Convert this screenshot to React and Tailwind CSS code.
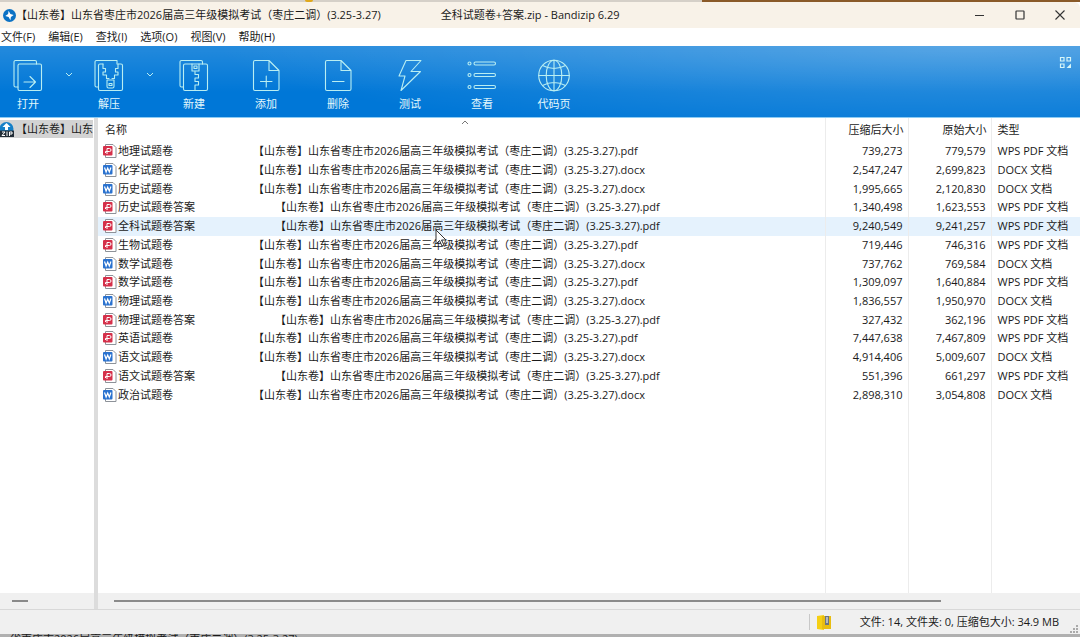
import React, {useState} from "react";

const EXAM = "【山东卷】山东省枣庄市2026届高三年级模拟考试（枣庄二调）(3.25-3.27)";

const files = [
    {name: "地理试题卷", ext: "pdf", packed: "739,273", size: "779,579"},
    {name: "化学试题卷", ext: "docx", packed: "2,547,247", size: "2,699,823"},
    {name: "历史试题卷", ext: "docx", packed: "1,995,665", size: "2,120,830"},
    {name: "历史试题卷答案", ext: "pdf", packed: "1,340,498", size: "1,623,553"},
    {name: "全科试题卷答案", ext: "pdf", packed: "9,240,549", size: "9,241,257"},
    {name: "生物试题卷", ext: "pdf", packed: "719,446", size: "746,316"},
    {name: "数学试题卷", ext: "docx", packed: "737,762", size: "769,584"},
    {name: "数学试题卷", ext: "pdf", packed: "1,309,097", size: "1,640,884"},
    {name: "物理试题卷", ext: "docx", packed: "1,836,557", size: "1,950,970"},
    {name: "物理试题卷答案", ext: "pdf", packed: "327,432", size: "362,196"},
    {name: "英语试题卷", ext: "pdf", packed: "7,447,638", size: "7,467,809"},
    {name: "语文试题卷", ext: "docx", packed: "4,914,406", size: "5,009,607"},
    {name: "语文试题卷答案", ext: "pdf", packed: "551,396", size: "661,297"},
    {name: "政治试题卷", ext: "docx", packed: "2,898,310", size: "3,054,808"},
];

const menus = ["文件(F)", "编辑(E)", "查找(I)", "选项(O)", "视图(V)", "帮助(H)"];

const Icon = ({children}) => (
    <svg width="34" height="34" viewBox="0 0 34 34" fill="none" stroke="#b9eef2" strokeWidth="1.1"
         strokeLinejoin="round" strokeLinecap="round">
        {children}
    </svg>
);

const OpenIcon = () => (
    <Icon>
        <path d="M7 29H4.5A1.5 1.5 0 0 1 3 27.5V4a1.5 1.5 0 0 1 1.5-1.5H24A1.5 1.5 0 0 1 25.5 4v2"/>
        <rect x="7" y="6" width="23.5" height="26.5" rx="1.5"/>
        <path d="M13 24h11M19 18.5l5.500 5.500-5.500 5.500"/>
    </Icon>
);

const ExtractIcon = () => (
    <Icon>
        <path d="M6 29H4.5A1.5 1.5 0 0 1 3 27.5V4a1.5 1.5 0 0 1 1.5-1.5H25V6"/>
        <path d="M11 6H8a1.5 1.5 0 0 0-1.500 1.5V31A1.5 1.5 0 0 0 8 32.5h21a1.5 1.5 0 0 0 1.5-1.5V7.5A1.5 1.5 0 0 0 29 6h-3"/>
        <path d="M11 6v4.500h2.500v3.500H11v3h3.500v3.500H17M26 6v4.500h-2.500v3.500H26v3h-3.500v3.500H20"/>
        <path d="M15 22h7v6.500a1.5 1.5 0 0 1-1.500 1.500h-4a1.5 1.5 0 0 1-1.500-1.500zM17 25.500h3v2h-3z"/>
    </Icon>
);

const NewIcon = () => (
    <Icon>
        <path d="M6 29H4.5A1.5 1.5 0 0 1 3 27.5V4a1.5 1.5 0 0 1 1.5-1.5H24A1.5 1.5 0 0 1 25.5 4v2"/>
        <rect x="6.5" y="6" width="24" height="26.5" rx="1.5"/>
        <path d="M15 6v7h7V6M17 8h3v2.500h-3z"/>
        <path d="M18 13.500v3h3.500v3.500H18v3.500h3.500V27H18v5.500"/>
    </Icon>
);

const AddIcon = () => (
    <Icon>
        <path d="M20 2.5H6A1.5 1.5 0 0 0 4.500 4v27A1.5 1.5 0 0 0 6 32.5h22.500A1.5 1.5 0 0 0 30 31V12.500zM20 2.500v10h10"/>
        <path d="M11.5 23.5h11.5M17.25 18v11"/>
    </Icon>
);

const DeleteIcon = () => (
    <Icon>
        <path d="M20 2.5H6A1.5 1.5 0 0 0 4.500 4v27A1.5 1.5 0 0 0 6 32.5h22.500A1.5 1.5 0 0 0 30 31V12.500zM20 2.500v10h10"/>
        <path d="M11.5 23.5h11.5"/>
    </Icon>
);

const TestIcon = () => (
    <Icon>
        <path d="M13 2.5H28L18 13.500h9.500L8 32.500l4-14.500H6z"/>
    </Icon>
);

const ViewIcon = () => (
    <Icon>
        {[5.5, 17, 29].map((y) => (
            <g key={y}>
                <circle cx="4.5" cy={y} r="1.5"/>
                <rect x="9" y={y - 1.5} width="21.5" height="3" rx="1.5"/>
            </g>
        ))}
    </Icon>
);

const CodePageIcon = () => (
    <Icon>
        <circle cx="17" cy="17.5" r="15.3"/>
        <ellipse cx="17" cy="17.5" rx="7.8" ry="15.3"/>
        <path d="M17 2.200v30.600M1.700 17.500h30.600M5.500 7.500q11.500 6 23 0M5.500 27.500q11.500-6 23 0"/>
    </Icon>
);

const tools = [
    {label: "新建", icon: <NewIcon/>},
    {label: "添加", icon: <AddIcon/>},
    {label: "删除", icon: <DeleteIcon/>},
    {label: "测试", icon: <TestIcon/>},
    {label: "查看", icon: <ViewIcon/>},
    {label: "代码页", icon: <CodePageIcon/>},
];

const splitTools = [
    {label: "打开", icon: <OpenIcon/>},
    {label: "解压", icon: <ExtractIcon/>},
];

const FileIcon = ({ext}) => (
    <svg width="14" height="16" viewBox="0 0 14 16" className="shrink-0">
        <path d="M2.5 1.5h7.500l3 3v10H2.500z" fill="#fff" stroke="#8d9299"/>
        <rect x="0" y="3" width="9.5" height="9.5" rx="1" fill={ext === "pdf" ? "#d5304a" : "#2a72cf"}/>
        {ext === "pdf" ? (
            <path d="M4 11V5.500H6.500a1.300 1.300 0 0 1 0 3H2.500v1.500" fill="none" stroke="#fff"/>
        ) : (
            <path d="M1.500 5.500l1.600 4.500 1.600-4 1.600 4 1.600-4.500" fill="none" stroke="#fff" strokeWidth="1.2"/>
        )}
    </svg>
);

const TitleBar = () => (
    <header className="flex h-[26px] shrink-0 items-center rounded-tr-md bg-[#f8f2e8] pl-[3px]">
        <svg width="13" height="13" viewBox="0 0 14 14" className="shrink-0">
            <circle cx="7" cy="7" r="7" fill="#0c72c4"/>
            <path d="M6 2L5.500 5.500 2.500 7.500l3.500 1L8 12l.500-3.500L11.500 6.500 8 5.500z" fill="#fff"/>
        </svg>
        <h1 className="flex whitespace-nowrap">
            <span>{EXAM}</span>
            <span className="ml-15">全科试题卷+答案.zip - Bandizip 6.29</span>
        </h1>
        <div className="ml-auto flex text-[#333]">
            <button aria-label="最小化" className="flex h-6 w-10 items-center justify-center">
                <svg width="10" height="10" viewBox="0 0 10 10" stroke="currentColor"><path d="M0 5.500h9"/></svg>
            </button>
            <button aria-label="最大化" className="flex h-6 w-10 items-center justify-center">
                <svg width="10" height="10" viewBox="0 0 10 10" fill="none" stroke="currentColor" strokeWidth="1.2">
                    <rect x="1" y="1" width="8" height="8" rx="0.5"/>
                </svg>
            </button>
            <button aria-label="关闭" className="flex h-6 w-10 items-center justify-center">
                <svg width="10" height="10" viewBox="0 0 10 10" stroke="currentColor" strokeWidth="1.1">
                    <path d="M.5.500l9 9M9.500.500l-9 9"/>
                </svg>
            </button>
        </div>
    </header>
);

const Toolbar = () => (
    <div
        className="flex h-[72px] shrink-0 items-start border-b border-[#8ccbf3] bg-[#0077d7] bg-[radial-gradient(ellipse_70%_130%_at_90%_0%,rgba(255,255,255,0.24),rgba(255,255,255,0)),linear-gradient(to_bottom,rgba(255,255,255,0.14),rgba(255,255,255,0)_65%)] text-[#e2f8fc]">
        {splitTools.map(({label, icon}) => (
            <div key={label} className="flex">
                <button className="flex w-14 flex-col items-center pt-3">
                    {icon}
                    <span className="leading-6">{label}</span>
                </button>
                <button aria-label={`${label}选项`} className="flex h-[58px] w-[25px] items-center justify-center">
                    <svg width="8" height="6" viewBox="0 0 8 6" fill="none" stroke="#b9eef2">
                        <path d="M1 1l3 3 3-3"/>
                    </svg>
                </button>
            </div>
        ))}
        <div className="flex gap-2">
            {tools.map(({label, icon}) => (
                <button key={label} className="flex w-16 flex-col items-center pt-3">
                    {icon}
                    <span className="leading-6">{label}</span>
                </button>
            ))}
        </div>
        <button aria-label="切换布局" className="mt-[10px] mr-2 ml-auto">
            <svg width="13" height="13" viewBox="0 0 13 13" fill="none" stroke="#d5f5f8" strokeWidth="1.2">
                <path d="M1.500 1.500h3.500v3.500h-3.500zM8 1.500h3.500v3.500H8zM1.500 8h3.500v3.500h-3.500z"/>
                <path d="M12 7.500V12H7.500z" fill="#d5f5f8" stroke="none"/>
            </svg>
        </button>
    </div>
);

const FolderTree = () => (
    <aside className="flex w-[94px] shrink-0 flex-col">
        <div className="mt-[2px] mr-px flex h-[18px] items-center overflow-hidden bg-[#d3d3d3] whitespace-nowrap">
            <svg width="14" height="15" viewBox="0 0 14 15" className="shrink-0">
                <circle cx="6.5" cy="7" r="7" fill="#1680c8"/>
                <path d="M6.500 1l4 4H8v3H5V5H2.500z" fill="#fff"/>
                <rect y="8.5" width="14" height="6.5" fill="#222c36"/>
                <path d="M2 10h3l-3 3.500h3M7 9.500v4.500M9.500 14v-4H12v2H9.500" fill="none" stroke="#fff"/>
            </svg>
            <span className="ml-[2px]">【山东卷】山东</span>
        </div>
        <div className="mt-auto h-4 bg-[#f0f0f0] pt-[7px] pl-3">
            <div className="h-[2px] w-4 bg-[#8a8a8a]"/>
        </div>
    </aside>
);

const FileList = () => {
    const [selected, setSelected] = useState(4);

    return (
        <main className="flex min-w-0 flex-1 flex-col overflow-hidden">
            <table className="h-[286px] w-full table-fixed border-collapse whitespace-nowrap">
                <thead>
                    <tr className="h-6 text-left">
                        <th className="relative p-0 pl-[7px] font-normal">
                            名称
                            <svg width="8" height="5" viewBox="0 0 8 5" fill="none" stroke="#777"
                                 className="absolute top-[2px] left-1/2">
                                <path d="M1 4l3-3 3 3"/>
                            </svg>
                        </th>
                        <th className="w-[83px] border-l border-[#ececec] p-0 pr-1 text-right font-normal">压缩后大小</th>
                        <th className="w-[83px] border-l border-[#ececec] p-0 pr-1 text-right font-normal">原始大小</th>
                        <th className="w-[89px] border-l border-[#ececec] p-0 pl-[6px] font-normal">类型</th>
                    </tr>
                </thead>
                <tbody>
                    {files.map((file, i) => (
                        <tr
                            key={file.name + file.ext}
                            onClick={() => setSelected(i)}
                            className={`leading-4 ${selected === i ? "bg-[#e5f2fd]" : ""}`}
                        >
                            <td className="p-0 pl-[5px]">
                                <div className="flex items-center">
                                    <FileIcon ext={file.ext}/>
                                    <span className="ml-px">{file.name}</span>
                                    <span className="ml-20">{EXAM}.{file.ext}</span>
                                </div>
                            </td>
                            <td className="border-l border-[#ececec] p-0 pr-[5px] text-right">{file.packed}</td>
                            <td className="border-l border-[#ececec] p-0 pr-[5px] text-right">{file.size}</td>
                            <td className="border-l border-[#ececec] p-0 pl-[6px]">
                                {file.ext === "pdf" ? "WPS PDF 文档" : "DOCX 文档"}
                            </td>
                        </tr>
                    ))}
                </tbody>
            </table>
            {/* column lines run on below the last file */}
            <div className="grid flex-1 grid-cols-[1fr_83px_83px_89px]">
                <div/>
                <div className="border-l border-[#ececec]"/>
                <div className="border-l border-[#ececec]"/>
                <div className="border-l border-[#ececec]"/>
            </div>
            <div className="h-4 bg-[#f0f0f0] pt-[7px] pr-[139px] pl-4">
                <div className="h-[2px] bg-[#8a8a8a]"/>
            </div>
        </main>
    );
};

const StatusBar = () => (
    <footer className="flex h-[25px] shrink-0 items-center justify-end border-t border-[#d8d8d8] bg-[#f0f0f0]">
        <div className="flex h-4 items-center border-l border-[#c8c8c8] pl-[7px]">
            <svg width="15" height="15" viewBox="0 0 15 15">
                <path d="M0 1l7-1v15l-7-1z" fill="#f5cf14"/>
                <path d="M5 1h9v13H5z" fill="#e8bd10"/>
                <path d="M8 1h4v9H8z" fill="#6a7480"/>
                <path d="M9 3h2M9 5h2M9 7h2" stroke="#fff"/>
            </svg>
        </div>
        <p className="ml-7 whitespace-nowrap">文件: 14, 文件夹: 0, 压缩包大小: 34.9 MB</p>
        <svg width="10" height="10" viewBox="0 0 10 10" className="mr-px ml-[10px] self-end" fill="#aaa">
            <path d="M7 1h2v2H7zM4 4h2v2H4zM7 4h2v2H7zM1 7h2v2H1zM4 7h2v2H4zM7 7h2v2H7z"/>
        </svg>
    </footer>
);

const App = () => (
    <div
        className="relative flex h-screen flex-col overflow-hidden bg-white font-['Open_Sans','Noto_Sans_CJK_SC',sans-serif] text-[11px] text-[#1a1a1a]">
        {/* slivers of the windows behind show above and below */}
        <div className="flex h-[2px] shrink-0 bg-[#8a5a28]">
            <div className="flex w-[65%] bg-[#d5d0c8] pl-[305px]">
                <div className="w-2 rounded-b bg-[#e0a81c]"/>
            </div>
        </div>
        <TitleBar/>
        <nav className="flex h-[18px] shrink-0 items-center gap-[13px] pl-px">
            {menus.map((menu) => (
                <button key={menu}>{menu}</button>
            ))}
        </nav>
        <Toolbar/>
        <div className="flex min-h-0 flex-1">
            <FolderTree/>
            <div className="w-1 shrink-0 bg-[#dcdcdc]"/>
            <FileList/>
        </div>
        <StatusBar/>
        <div className="h-[3px] shrink-0 overflow-hidden bg-[#b0b0b0] pl-[10px] leading-[10px] whitespace-nowrap">
            省枣庄市2026届高三年级模拟考试（枣庄二调）(3.25-3.27)
        </div>
        <svg width="12" height="18" viewBox="0 0 12 18" className="absolute top-[229px] left-[435px]">
            <path d="M1 1v14l3.500-3.500L7 17l2-1-2.500-5H11z" fill="#fff" stroke="#333"/>
        </svg>
    </div>
);

export default App;
